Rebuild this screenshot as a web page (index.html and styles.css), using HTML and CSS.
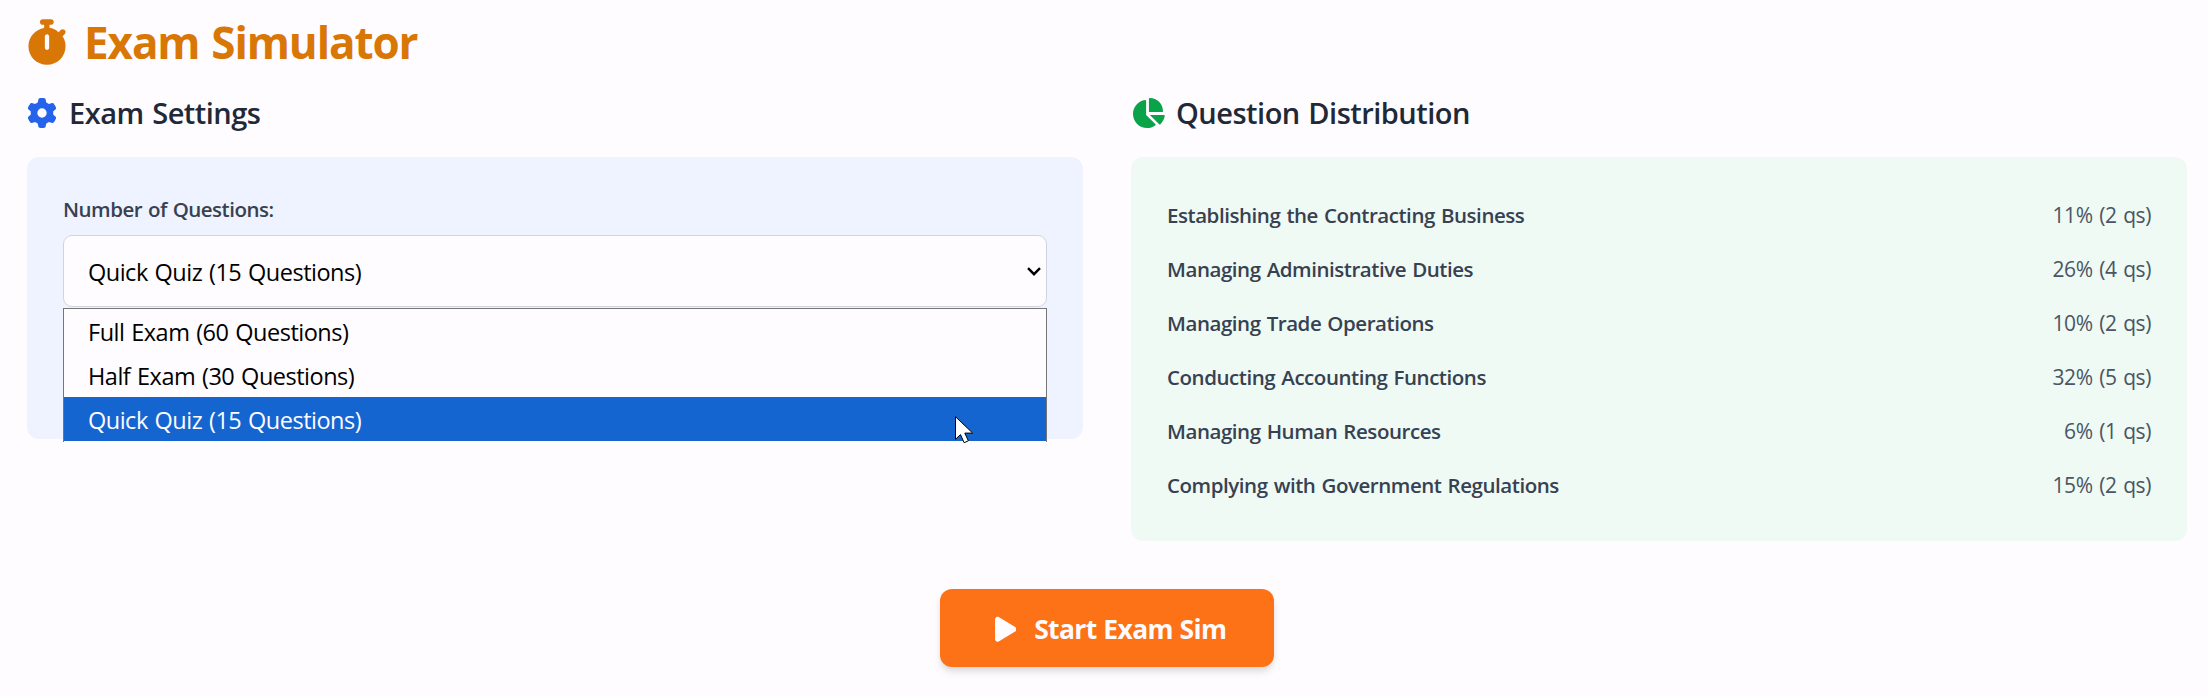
FILE: index.html
```
<!DOCTYPE html>
<html lang="en">
  <head>
    <meta charset="UTF-8" />
    <meta name="viewport" content="width=device-width, initial-scale=1.0" />
    <title>Exam Simulator</title>
    <link rel="stylesheet" href="styles.css">
  </head>
  <body>
    <div class="container">
      <h1 class="page-title">
        <svg class="icon-stopwatch" viewBox="0 0 448 512"><path d="M176 0c-17.7 0-32 14.3-32 32s14.3 32 32 32h16V98.4C92.3 113.8 16 200 16 304c0 114.9 93.1 208 208 208s208-93.1 208-208c0-41.8-12.3-80.7-33.5-113.2l24.1-24.1c12.5-12.5 12.5-32.8 0-45.3s-32.8-12.5-45.3 0l-24.1 24.1c-28.1-25.5-63-43.2-101.2-49.1V64h16c17.7 0 32-14.3 32-32s-14.3-32-32-32H176zm72 192V320c0 13.3-10.7 24-24 24s-24-10.7-24-24V192c0-13.3 10.7-24 24-24s24 10.7 24 24z"/></svg>
        <span>Exam Simulator</span>
      </h1>

      <div class="columns">
        <section class="settings">
          <h2>
            <svg class="icon-gear" viewBox="0 0 512 512"><path d="M495.9 166.6c3.2 8.7 .5 18.4-6.4 24.6l-43.3 39.4c1.1 8.3 1.7 16.8 1.7 25.4s-.6 17.1-1.7 25.4l43.3 39.4c6.9 6.2 9.6 15.9 6.4 24.6c-4.4 11.9-9.7 23.3-15.8 34.3l-4.7 8.1c-6.6 11-14 21.4-22.1 31.2c-5.9 7.2-15.7 9.6-24.5 6.8l-55.7-17.7c-13.4 10.3-28.2 18.9-44 25.4l-12.5 57.1c-2 9.1-9 16.3-18.2 17.8c-13.8 2.3-28 3.5-42.5 3.5s-28.7-1.2-42.5-3.5c-9.2-1.5-16.2-8.7-18.2-17.8l-12.5-57.1c-15.8-6.5-30.6-15.1-44-25.4L83.1 425.9c-8.8 2.8-18.6 .3-24.5-6.8c-8.1-9.8-15.5-20.2-22.1-31.2l-4.7-8.1c-6.1-11-11.4-22.4-15.8-34.3c-3.2-8.7-.5-18.4 6.4-24.6l43.3-39.4C64.6 273.1 64 264.6 64 256s.6-17.1 1.7-25.4L22.4 191.2c-6.9-6.2-9.6-15.9-6.4-24.6c4.4-11.9 9.7-23.3 15.8-34.3l4.7-8.1c6.6-11 14-21.4 22.1-31.2c5.9-7.2 15.7-9.6 24.5-6.8l55.7 17.7c13.4-10.3 28.2-18.9 44-25.4l12.5-57.1c2-9.1 9-16.3 18.2-17.8C227.3 1.2 241.5 0 256 0s28.7 1.2 42.5 3.5c9.2 1.5 16.2 8.7 18.2 17.8l12.5 57.1c15.8 6.5 30.6 15.1 44 25.4l55.7-17.7c8.8-2.8 18.6-.3 24.5 6.8c8.1 9.8 15.5 20.2 22.1 31.2l4.7 8.1c6.1 11 11.4 22.4 15.8 34.3zM256 336a80 80 0 1 0 0-160 80 80 0 1 0 0 160z"/></svg>
            <span>Exam Settings</span>
          </h2>
          <div class="card settings-card">
            <label>Number of Questions:</label>
            <div class="select">
              <div class="select-box">
                <span>Quick Quiz (15 Questions)</span>
                <svg class="chevron" viewBox="0 0 14 9"><path d="M1 1.2l6 6 6-6"/></svg>
              </div>
              <ul class="options">
                <li>Full Exam (60 Questions)</li>
                <li>Half Exam (30 Questions)</li>
                <li class="selected">Quick Quiz (15 Questions)</li>
              </ul>
              <svg class="cursor" viewBox="0 0 19 28"><path d="M.5.7v22.6l5-4.7 3.6 8.1 4.3-1.9-3.6-7.7h7.9z"/></svg>
            </div>
          </div>
        </section>

        <section class="distribution">
          <h2>
            <svg class="icon-pie" viewBox="0 0 576 512"><path d="M304 240V16.6c0-9 7-16.6 16-16.6C443.7 0 544 100.3 544 224c0 9-7.6 16-16.6 16H304zM32 272C32 150.7 122.1 50.3 239 34.3c9.2-1.3 17 6.1 17 15.4V288L412.5 444.5c6.7 6.7 6.2 17.7-1.5 23.1C371.8 495.6 323.8 512 272 512C139.5 512 32 404.6 32 272zm526.4 16c9.3 0 16.6 7.8 15.4 17c-7.7 55.9-34.6 105.6-73.9 142.3c-6 5.6-15.4 5.2-21.2-.7L320 288H558.4z"/></svg>
            <span>Question Distribution</span>
          </h2>
          <div class="card distribution-card">
            <div class="row"><span class="topic">Establishing the Contracting Business</span><span class="share">11% (2 qs)</span></div>
            <div class="row"><span class="topic">Managing Administrative Duties</span><span class="share">26% (4 qs)</span></div>
            <div class="row"><span class="topic">Managing Trade Operations</span><span class="share">10% (2 qs)</span></div>
            <div class="row"><span class="topic">Conducting Accounting Functions</span><span class="share">32% (5 qs)</span></div>
            <div class="row"><span class="topic">Managing Human Resources</span><span class="share">6% (1 qs)</span></div>
            <div class="row"><span class="topic">Complying with Government Regulations</span><span class="share">15% (2 qs)</span></div>
          </div>
        </section>
      </div>

      <div class="actions">
        <button class="start-button" type="button">
          <svg class="icon-play" viewBox="0 0 384 512"><path d="M73 39c-14.8-9.1-33.4-9.4-48.5-.9S0 62.6 0 80V432c0 17.4 9.4 33.4 24.5 41.9s33.7 8.1 48.5-.9L361 297c14.3-8.7 23-24.2 23-41s-8.7-32.2-23-41L73 39z"/></svg>
          <span>Start Exam Sim</span>
        </button>
      </div>
    </div>
  </body>
</html>
```
FILE: styles.css
```
* {
  margin: 0;
  padding: 0;
  box-sizing: border-box;
}

body {
  background: #fefcff;
  color: #1f2937;
  font-family: "Segoe UI", "Open Sans", "Noto Sans", sans-serif;
}

svg {
  display: block;
  flex-shrink: 0;
  fill: currentColor;
}

.container {
  height: 696px;
  padding: 12px 21px 0 27px;
  overflow: hidden;
}

.page-title {
  display: flex;
  align-items: center;
  gap: 17px;
  height: 60px;
  color: #d97706;
  font-size: 44px;
  font-weight: 700;
  letter-spacing: -1.1px;
  word-spacing: 1.5px;
}

.icon-stopwatch {
  width: 40px;
  height: 46px;
}

.columns {
  display: grid;
  grid-template-columns: 1fr 1fr;
  gap: 48px;
  align-items: start;
  margin-top: 18px;
}

h2 {
  display: flex;
  align-items: center;
  height: 46px;
  margin-bottom: 21px;
  font-size: 29px;
  font-weight: 600;
  letter-spacing: -0.5px;
  word-spacing: 1.5px;
}

h2 span {
  padding-bottom: 1px;
}

.icon-gear {
  width: 30px;
  height: 30px;
  margin-right: 12px;
  color: #2563eb;
}

.icon-pie {
  width: 34px;
  height: 30px;
  margin-right: 11px;
  color: #0ba34a;
}

.card {
  border-radius: 12px;
  padding: 36px;
}

.settings-card {
  height: 282px;
  background: #eef3ff;
}

.settings-card label {
  display: block;
  height: 42px;
  line-height: 32px;
  color: #374151;
  font-size: 20.5px;
  font-weight: 600;
  letter-spacing: -0.5px;
  word-spacing: 1px;
}

.select {
  position: relative;
  color: #000;
  font-size: 23.5px;
  letter-spacing: -0.5px;
  word-spacing: 1.2px;
}

.select-box {
  display: flex;
  align-items: center;
  justify-content: space-between;
  height: 72px;
  padding: 1px 5px 0 24px;
  background: #fefcff;
  border: 1px solid #d1d5db;
  border-radius: 9px;
}

.chevron {
  width: 14px;
  height: 9px;
  fill: none;
  stroke: #000;
  stroke-width: 2.4;
}

.options {
  position: absolute;
  top: 73px;
  left: 0;
  width: 100%;
  height: 134px;
  background: #fefcff;
  border: 1px solid #767676;
  border-bottom: none;
  list-style: none;
}

.options li {
  height: 44px;
  padding-left: 24px;
  line-height: 46px;
}

.options .selected {
  background: #1565d1;
  color: #fefcff;
}

.cursor {
  position: absolute;
  top: 181px;
  left: 892px;
  width: 19px;
  height: 28px;
  fill: #fff;
  stroke: #000;
}

.distribution-card {
  display: flex;
  flex-direction: column;
  gap: 18px;
  height: 384px;
  padding-top: 40px;
  background: #effaf4;
}

.row {
  display: flex;
  align-items: center;
  justify-content: space-between;
  height: 36px;
  font-size: 20.5px;
}

.topic {
  color: #374151;
  font-weight: 600;
  letter-spacing: -0.45px;
  word-spacing: 1.2px;
}

.share {
  color: #4b5563;
  font-size: 21px;
  letter-spacing: -0.4px;
  word-spacing: 1.5px;
}

.actions {
  display: flex;
  justify-content: center;
  margin-top: 48px;
}

.start-button {
  display: flex;
  align-items: center;
  justify-content: center;
  gap: 18px;
  width: 334px;
  height: 78px;
  padding: 2px 0 0 7px;
  background: #fd7117;
  border: none;
  border-radius: 12px;
  box-shadow: 0 6px 9px -1px rgba(0, 0, 0, 0.1), 0 3px 6px -2px rgba(0, 0, 0, 0.1);
  color: #fefcff;
  font-family: inherit;
  font-size: 26.5px;
  font-weight: 700;
  letter-spacing: -0.65px;
  word-spacing: 0.5px;
  cursor: pointer;
}

.icon-play {
  width: 21.5px;
  height: 28.5px;
}
```
